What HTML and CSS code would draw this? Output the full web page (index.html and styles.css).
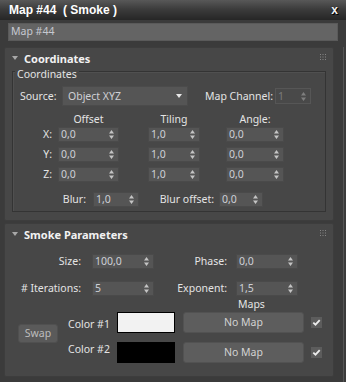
FILE: index.html
```html
<!DOCTYPE html>
<html>
<head>
<meta charset="utf-8">
<link rel="stylesheet" href="styles.css">
</head>
<body>
<div class="titlebar">
  <span class="title">Map #44  ( Smoke )</span>
  <span class="close">x</span>
</div>
<div class="namefield">Map #44</div>
<div class="main">
  <div class="rollouts">
    <div class="panel panel1">
      <div class="phead">
        <svg class="tri" width="6" height="4" viewBox="0 0 6 4"><path d="M0 0H6L3 4Z"/></svg>
        <span class="ptitle">Coordinates</span>
        <svg class="grip" width="6" height="6" viewBox="0 0 6 6"><path d="M0 0h1v1H0zM2.5 0h1v1h-1zM5 0h1v1H5zM0 2.5h1v1H0zM2.5 2.5h1v1h-1zM5 2.5h1v1H5zM0 5h1v1H0zM2.5 5h1v1h-1zM5 5h1v1H5z"/></svg>
      </div>
      <div class="group">
        <div class="glabel">Coordinates</div>
        <div class="srcrow">
          <span class="srclabel">Source:</span>
          <div class="dropdown"><span>Object XYZ</span><svg width="6" height="4" viewBox="0 0 6 4"><path d="M0 0H6L3 4Z"/></svg></div>
          <span class="mclabel">Map Channel:</span>
          <div class="spin disabled w36 h16"><span>1</span><svg class="arr" width="5" height="9" viewBox="0 0 5 9"><path d="M2.5 0L5 3.5H0zM0 5.5H5L2.5 9z"/></svg></div>
        </div>
        <div class="colhead">
          <span></span>
          <span class="ch w61">Offset</span>
          <span class="ch w52">Tiling</span>
          <span class="ch w58">Angle:</span>
        </div>
        <div class="grid">
          <span class="rl">X:</span>
          <div class="spin w61"><span>0,0</span><svg class="arr" width="5" height="9" viewBox="0 0 5 9"><path d="M2.5 0L5 3.5H0zM0 5.5H5L2.5 9z"/></svg></div>
          <div class="spin w52"><span>1,0</span><svg class="arr" width="5" height="9" viewBox="0 0 5 9"><path d="M2.5 0L5 3.5H0zM0 5.5H5L2.5 9z"/></svg></div>
          <div class="spin w58"><span>0,0</span><svg class="arr" width="5" height="9" viewBox="0 0 5 9"><path d="M2.5 0L5 3.5H0zM0 5.5H5L2.5 9z"/></svg></div>
          <span class="rl">Y:</span>
          <div class="spin w61"><span>0,0</span><svg class="arr" width="5" height="9" viewBox="0 0 5 9"><path d="M2.5 0L5 3.5H0zM0 5.5H5L2.5 9z"/></svg></div>
          <div class="spin w52"><span>1,0</span><svg class="arr" width="5" height="9" viewBox="0 0 5 9"><path d="M2.5 0L5 3.5H0zM0 5.5H5L2.5 9z"/></svg></div>
          <div class="spin w58"><span>0,0</span><svg class="arr" width="5" height="9" viewBox="0 0 5 9"><path d="M2.5 0L5 3.5H0zM0 5.5H5L2.5 9z"/></svg></div>
          <span class="rl">Z:</span>
          <div class="spin w61"><span>0,0</span><svg class="arr" width="5" height="9" viewBox="0 0 5 9"><path d="M2.5 0L5 3.5H0zM0 5.5H5L2.5 9z"/></svg></div>
          <div class="spin w52"><span>1,0</span><svg class="arr" width="5" height="9" viewBox="0 0 5 9"><path d="M2.5 0L5 3.5H0zM0 5.5H5L2.5 9z"/></svg></div>
          <div class="spin w58"><span>0,0</span><svg class="arr" width="5" height="9" viewBox="0 0 5 9"><path d="M2.5 0L5 3.5H0zM0 5.5H5L2.5 9z"/></svg></div>
        </div>
        <div class="blurrow">
          <span class="bl1">Blur:</span>
          <div class="spin w46"><span>1,0</span><svg class="arr" width="5" height="9" viewBox="0 0 5 9"><path d="M2.5 0L5 3.5H0zM0 5.5H5L2.5 9z"/></svg></div>
          <span class="bl2">Blur offset:</span>
          <div class="spin w44"><span>0,0</span><svg class="arr" width="5" height="9" viewBox="0 0 5 9"><path d="M2.5 0L5 3.5H0zM0 5.5H5L2.5 9z"/></svg></div>
        </div>
      </div>
    </div>
    <div class="panel panel2">
      <div class="phead">
        <svg class="tri" width="6" height="4" viewBox="0 0 6 4"><path d="M0 0H6L3 4Z"/></svg>
        <span class="ptitle">Smoke Parameters</span>
        <svg class="grip" width="6" height="6" viewBox="0 0 6 6"><path d="M0 0h1v1H0zM2.5 0h1v1h-1zM5 0h1v1H5zM0 2.5h1v1H0zM2.5 2.5h1v1h-1zM5 2.5h1v1H5zM0 5h1v1H0zM2.5 5h1v1h-1zM5 5h1v1H5z"/></svg>
      </div>
      <div class="sgrid">
        <span class="sl1">Size:</span>
        <div class="spin w62"><span>100,0</span><svg class="arr" width="5" height="9" viewBox="0 0 5 9"><path d="M2.5 0L5 3.5H0zM0 5.5H5L2.5 9z"/></svg></div>
        <span class="sl2">Phase:</span>
        <div class="spin w62"><span>0,0</span><svg class="arr" width="5" height="9" viewBox="0 0 5 9"><path d="M2.5 0L5 3.5H0zM0 5.5H5L2.5 9z"/></svg></div>
        <span class="sl1"># Iterations:</span>
        <div class="spin w62"><span>5</span><svg class="arr" width="5" height="9" viewBox="0 0 5 9"><path d="M2.5 0L5 3.5H0zM0 5.5H5L2.5 9z"/></svg></div>
        <span class="sl2">Exponent:</span>
        <div class="spin w62"><span>1,5</span><svg class="arr" width="5" height="9" viewBox="0 0 5 9"><path d="M2.5 0L5 3.5H0zM0 5.5H5L2.5 9z"/></svg></div>
      </div>
      <div class="maps">Maps</div>
      <div class="colors">
        <div class="swap">Swap</div>
        <div class="cgrid">
          <span class="cl cl1">Color #1</span>
          <div class="swatch white"></div>
          <div class="nomap">No Map</div>
          <div class="check"><svg width="11" height="11" viewBox="0 0 11 11"><path d="M2.3 5.6L4.5 7.7L8.7 3.2"/></svg></div>
          <span class="cl cl2">Color #2</span>
          <div class="swatch black"></div>
          <div class="nomap">No Map</div>
          <div class="check"><svg width="11" height="11" viewBox="0 0 11 11"><path d="M2.3 5.6L4.5 7.7L8.7 3.2"/></svg></div>
        </div>
      </div>
    </div>
  </div>
  <div class="sbar"></div>
</div>
</body>
</html>
```
FILE: styles.css
```css
html, body {
  margin: 0;
  padding: 0;
}
body {
  width: 346px;
  height: 382px;
  overflow: hidden;
  background: #3b3b3b;
  font-family: "Noto Sans", sans-serif;
  font-size: 10.5px;
  color: #e4e4e4;
  line-height: 13px;
}
.titlebar {
  height: 20px;
  box-sizing: border-box;
  display: flex;
  align-items: center;
  justify-content: space-between;
  padding: 0 8px 0 9px;
  background: linear-gradient(#585858, #3c3c3c 45%, #262626);
}
.title {
  font: bold 12px "Liberation Sans", sans-serif;
  color: #ffffff;
  white-space: pre;
}
.close {
  font: bold 12px "Liberation Sans", sans-serif;
  color: #f2f2f2;
  text-shadow: 0 0 1px #000, 1px 1px 0 #000;
}
.namefield {
  margin: 3px 8px 0 8px;
  height: 18px;
  box-sizing: border-box;
  background: #646464;
  border: 1px solid #5a5a5a;
  padding-left: 2px;
  line-height: 15px;
  color: #c6c8d0;
}
.main {
  display: flex;
  margin-top: 6px;
  height: 335px;
}
.rollouts {
  margin-left: 4px;
  width: 330px;
  display: flex;
  flex-direction: column;
  gap: 2px;
}
.sbar {
  width: 9px;
  border-right: 1px solid #555;
}
.panel {
  background: #474747;
  border: 1px solid #3d3d3d;
  border-radius: 2px;
  box-sizing: border-box;
}
.panel1 { height: 174px; }
.panel2 { height: 154px; }
.phead {
  height: 22px;
  box-sizing: border-box;
  display: flex;
  align-items: center;
  padding: 0 7px 2px 7px;
}
.tri { fill: #a8a8a8; }
.ptitle {
  flex: 1;
  margin-left: 6px;
  font-weight: bold;
  font-size: 11px;
  color: #f2f2f2;
}
.grip { fill: #858585; margin-top: -2px; }
.group {
  margin: 1px 7px 0 7px;
  border: 1px solid #343434;
  box-shadow: inset 1px 1px 0 #505050;
  padding-bottom: 4px;
}
.glabel {
  margin: -4px 0 0 2px;
  padding: 0 2px;
  width: max-content;
  background: #474747;
  color: #e4e4e4;
}
.srcrow {
  display: flex;
  align-items: center;
  height: 20px;
  margin-top: 5px;
  padding-left: 7px;
}
.srclabel { width: 42px; }
.dropdown {
  width: 126px;
  height: 20px;
  box-sizing: border-box;
  background: #555;
  border: 1px solid #4b4b4b;
  display: flex;
  align-items: center;
  justify-content: space-between;
  padding: 0 5px 0 5px;
  color: #cfd0d4;
}
.dropdown svg { fill: #e8e8e8; }
.mclabel { margin-left: 17px; width: 70px; }
.spin {
  height: 15px;
  box-sizing: border-box;
  background: #555;
  border: 1px solid #4a4a4a;
  display: flex;
  align-items: center;
  justify-content: space-between;
  padding: 0 4px 0 2px;
  color: #cdd0d6;
}
.arr { fill: #c4c4c4; }
.spin.disabled {
  background: #494949;
  border-color: #565656;
  color: #7b7b7b;
}
.spin.disabled .arr { fill: #7e7e7e; }
.h16 { height: 16px; }
.w36 { width: 36px; }
.w44 { width: 44px; }
.w46 { width: 46px; }
.w52 { width: 52px; }
.w58 { width: 58px; }
.w61 { width: 61px; }
.w62 { width: 62px; }
.colhead, .grid {
  display: grid;
  grid-template-columns: 45px 90px 78px 58px;
}
.colhead { margin-top: 7px; }
.ch { text-align: center; }
.grid {
  margin-top: 1px;
  row-gap: 5px;
  align-items: center;
}
.rl {
  text-align: right;
  padding-right: 6px;
}
.blurrow {
  display: flex;
  align-items: center;
  height: 15px;
  margin-top: 10px;
}
.bl1 { width: 73px; text-align: right; margin-right: 7px; }
.bl2 { width: 75px; text-align: right; margin-right: 5px; }
.sgrid {
  display: grid;
  grid-template-columns: 87px 62px 82px 62px;
  grid-auto-rows: 15px;
  row-gap: 12px;
  align-items: center;
  margin-top: 8px;
}
.sl1 { text-align: right; padding-right: 11px; }
.sl2 { text-align: right; padding-right: 9px; }
.maps {
  margin-top: 2px;
  padding-left: 233px;
}
.colors {
  display: flex;
  align-items: flex-start;
  margin-top: 1px;
}
.swap {
  margin: 12px 0 0 13px;
  width: 40px;
  height: 19px;
  box-sizing: border-box;
  background: #5a5a5a;
  border: 1px solid #505050;
  border-radius: 3px;
  color: #bdbdbd;
  text-align: center;
  line-height: 17px;
}
.cgrid {
  margin-left: 10px;
  display: grid;
  grid-template-columns: 49px 66px 128px 11px;
  grid-auto-rows: 21px;
  row-gap: 9px;
}
.cl1 { padding-top: 6px; }
.cl2 { padding-top: 1px; }
.swatch {
  width: 58px;
  height: 21px;
  box-sizing: border-box;
}
.white { background: #f2f2f2; border: 1px solid #000; }
.black { background: #000; }
.nomap {
  width: 121px;
  height: 21px;
  box-sizing: border-box;
  background: #5d5d5d;
  border: 1px solid #525252;
  border-radius: 3px;
  color: #d2d2d2;
  text-align: center;
  line-height: 19px;
}
.check {
  align-self: center;
  width: 11px;
  height: 11px;
  background: #5c5c5c;
}
.check svg {
  display: block;
  fill: none;
  stroke: #ececec;
  stroke-width: 1.8;
}
```
